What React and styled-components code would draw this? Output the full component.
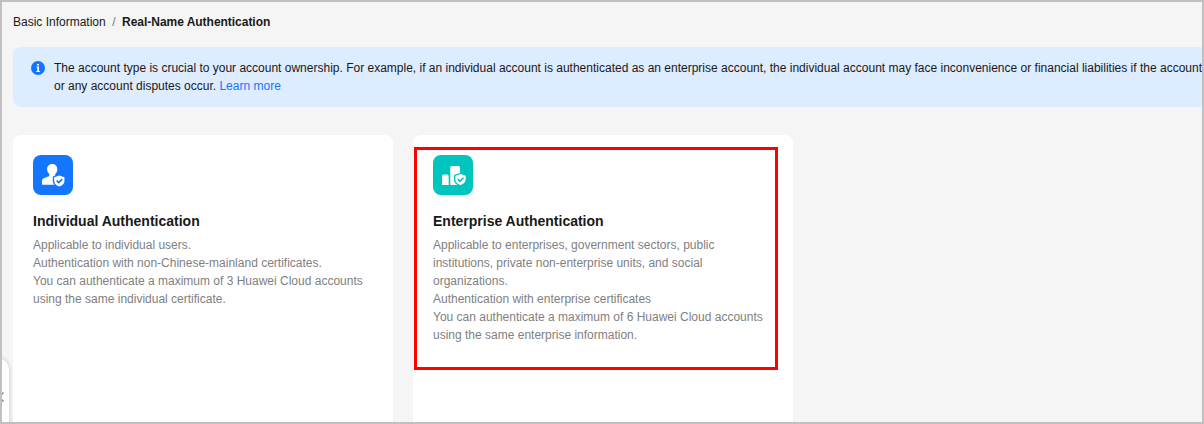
import styled, { createGlobalStyle } from "styled-components";

const GlobalStyle = createGlobalStyle`
  * {
    box-sizing: border-box;
  }

  body {
    margin: 0;
    font-family: "Liberation Sans", Arial, sans-serif;
    font-size: 12px;
    line-height: 18px;
    color: #191919;
  }

  h2, p {
    margin: 0;
  }
`;

const Page = styled.main`
  position: relative;
  display: flex;
  flex-direction: column;
  width: 1204px;
  height: 424px;
  padding: 11px 0 0 11px;
  border: 2px solid #c0c0c0;
  background: #f5f5f5;
  overflow: hidden;
`;

const Breadcrumb = styled.nav`
  display: flex;
  gap: 6.500px;
  height: 18px;
  white-space: nowrap;

  span {
    color: #71757f;
  }

  strong {
    letter-spacing: -0.03px;
  }
`;

const Notice = styled.section`
  display: flex;
  flex-shrink: 0;
  gap: 9px;
  width: 1400px;
  height: 60px;
  margin-top: 16px;
  padding: 12px 18px;
  border-radius: 8px;
  background: #deecff;
  white-space: nowrap;

  svg {
    flex-shrink: 0;
    margin-top: 2px;
  }

  a {
    color: #1476ff;
    text-decoration: none;
  }
`;

const Cards = styled.section`
  display: flex;
  gap: 20px;
  margin-top: 28px;
`;

const Card = styled.article`
  flex-shrink: 0;
  width: 380px;
  height: 320px;
  padding: 20px;
  border-radius: 8px;
  background: #ffffff;

  h2 {
    margin-top: 15px;
    font-size: 14px;
    line-height: 22px;
  }
`;

const CardText = styled.div`
  margin-top: 4px;
  color: #808080;
  white-space: nowrap;
`;

const CardIcon = styled.svg`
  display: block;
  width: 40px;
  height: 40px;
  border-radius: 8px;
  background: ${(props) => props.$color};
`;

const Highlight = styled.div`
  position: absolute;
  top: 145px;
  left: 412px;
  width: 364px;
  height: 223px;
  border: 3px solid #ff0000;
`;

const DrawerHandle = styled.div`
  position: absolute;
  top: 356px;
  left: -13px;
  width: 20px;
  height: 80px;
  border-radius: 0 12px 12px 0;
  background: #ffffff;
  box-shadow: 0 0 5px rgba(0, 0, 0, 0.2);

  svg {
    position: absolute;
    top: 33px;
    left: 9px;
  }
`;

function InfoIcon() {
  return (
    <svg width="14" height="14" viewBox="0 0 14 14">
      <circle cx="7" cy="7" r="7" fill="#1476ff" />
      <path d="M6.1 2.9h1.9v1.5H6.1zM5.5 5.5H8v4.6h.9v1H5.3v-1h1V6.4h-.8z" fill="#fff" />
    </svg>
  );
}

function Shield({ x, y, color }) {
  return (
    <g transform={`translate(${x} ${y}) scale(1.12 1.08)`}>
      <path
        d="M5 0L9.6 1.6V5C9.6 7.6 7.4 9.3 5 10.2C2.6 9.3.4 7.6.4 5V1.6Z"
        fill="#fff"
        stroke={color}
        strokeWidth="2.4"
        strokeLinejoin="round"
        paintOrder="stroke"
      />
      <path d="M2.700 4.700L4.500 6.600L7.600 3.400" fill="none" stroke={color} strokeWidth="1.5" />
    </g>
  );
}

function PersonIcon() {
  return (
    <CardIcon $color="#1476ff" viewBox="0 0 40 40">
      <path
        d="M19.200 9c3.200 0 5.100 2.200 5.100 5.200 0 2.200-.8 3.700-2.100 4.900v1.200c0 .7.4 1 1 1.300l6 2.600v5.500H9v-3.400c0-1.700.8-2.800 2.300-3.400l4-1.500c.8-.3 1.100-.7 1.100-1.400v-1c-1.400-1.200-2.300-2.800-2.300-4.800C14.100 11.200 16 9 19.200 9z"
        fill="#fff"
      />
      <path d="M27 20h5v12h-8V24z" fill="#1476ff" />
      <Shield x={20.700} y={20.500} color="#1476ff" />
    </CardIcon>
  );
}

function BuildingIcon() {
  return (
    <CardIcon $color="#00c5be" viewBox="0 0 40 40">
      <path
        d="M9 30V21.500Q9 19.500 11 19.500H13.700Q15.700 19.500 15.700 21.500V30zM17.300 30V12.500Q17.300 11 18.800 11H25.500Q27 11 27 12.500V30z"
        fill="#fff"
      />
      <path d="M22.500 24h6v7h-4z" fill="#00c5be" />
      <Shield x={21.900} y={19.100} color="#00c5be" />
    </CardIcon>
  );
}

export default function App() {
  return (
    <>
      <GlobalStyle />
      <Page>
        <Breadcrumb>
          Basic Information <span>/</span>
          <strong>Real-Name Authentication</strong>
        </Breadcrumb>

        <Notice>
          <InfoIcon />
          <div>
            <p>
              The account type is crucial to your account ownership. For example, if an individual
              account is authenticated as an enterprise account, the individual account may face
              inconvenience or financial liabilities if the account
            </p>
            <p>
              or any account disputes occur. <a href="#">Learn more</a>
            </p>
          </div>
        </Notice>

        <Cards>
          <Card>
            <PersonIcon />
            <h2>Individual Authentication</h2>
            <CardText>
              <p>Applicable to individual users.</p>
              <p>Authentication with non-Chinese-mainland certificates.</p>
              <p>You can authenticate a maximum of 3 Huawei Cloud accounts</p>
              <p>using the same individual certificate.</p>
            </CardText>
          </Card>
          <Card>
            <BuildingIcon />
            <h2>Enterprise Authentication</h2>
            <CardText>
              <p>Applicable to enterprises, government sectors, public</p>
              <p>institutions, private non-enterprise units, and social</p>
              <p>organizations.</p>
              <p>Authentication with enterprise certificates</p>
              <p>You can authenticate a maximum of 6 Huawei Cloud accounts</p>
              <p>using the same enterprise information.</p>
            </CardText>
          </Card>
        </Cards>

        <Highlight />
        <DrawerHandle>
          <svg width="8" height="12" viewBox="0 0 8 12" fill="none" stroke="#808080" strokeWidth="1.3">
            <path d="M5.500 1.500L1 6L5.500 10.500" />
          </svg>
        </DrawerHandle>
      </Page>
    </>
  );
}
